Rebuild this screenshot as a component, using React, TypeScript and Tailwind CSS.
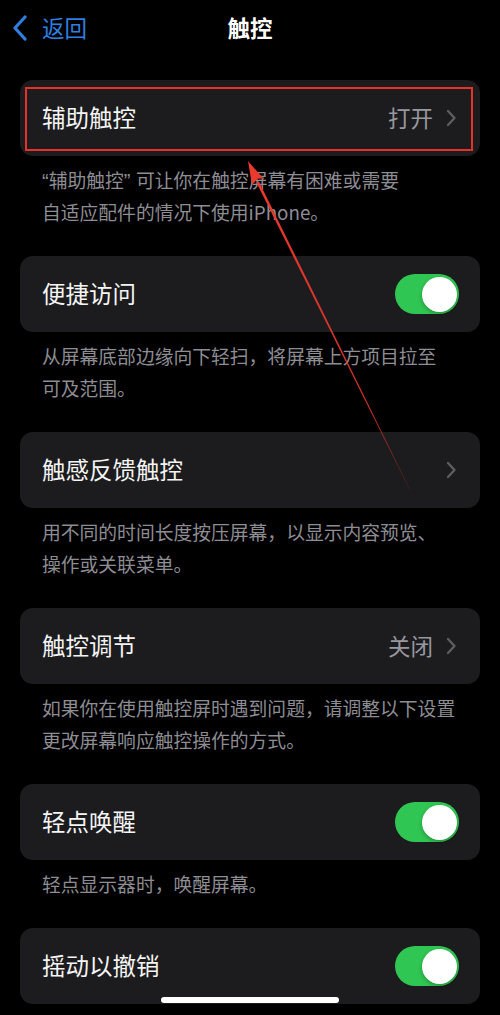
import { ReactNode } from "react";

const font = { fontFamily: '"Noto Sans CJK SC", "Noto Sans", sans-serif' };

function Chevron() {
  return (
    <svg width="12" height="18" viewBox="0 0 12 18" className="shrink-0">
      <path d="M3 2 L9.5 9 L3 16" fill="none" stroke="#5c5c61" strokeWidth="2.4" strokeLinecap="round" strokeLinejoin="round" />
    </svg>
  );
}

function Toggle() {
  return (
    <div className="flex h-[40px] w-[64px] items-center justify-end rounded-full bg-[#30c653] px-[2.5px]">
      <div className="size-[35px] rounded-full bg-white shadow-[0_2px_4px_rgba(0,0,0,0.25)]" />
    </div>
  );
}

function Row({ label, value, toggle, children }: { label: string; value?: string; toggle?: boolean; children?: ReactNode }) {
  return (
    <div className="relative flex h-[76px] items-center justify-between rounded-[13px] bg-[#1c1c1e] pl-[22px] pr-[21px]">
      <span className="text-[23.5px] text-[#f4f4f4]">{label}</span>
      {toggle ? (
        <Toggle />
      ) : (
        <div className="flex items-center gap-[12px] pr-[2px]">
          {value && <span className="text-[22.5px] text-[#98989e]">{value}</span>}
          <Chevron />
        </div>
      )}
      {children}
    </div>
  );
}

function Desc({ lines }: { lines: ReactNode[] }) {
  return (
    <div className="pb-[28px] pl-[22px] pt-[8px] text-[18.8px] leading-[32px] text-[#8d8d93]">
      {lines.map((l, i) => (
        <div key={i} className="h-[32px] overflow-hidden">{l}</div>
      ))}
    </div>
  );
}

// latin quotes so they don't take a full CJK cell
const q = "font-['Liberation_Sans'] text-[20px] leading-none";

export default function App() {
  return (
    <div className="relative h-[1015px] w-[500px] overflow-hidden bg-black" style={font}>
      <div className="relative flex h-[55px] items-center">
        <div className="flex items-center gap-[14px] pl-[12px]">
          <svg width="16" height="26" viewBox="0 0 16 26">
            <path d="M13 2 L3 13 L13 24" fill="none" stroke="#2f7fe0" strokeWidth="3.2" strokeLinecap="round" strokeLinejoin="round" />
          </svg>
          <span className="text-[22.5px] text-[#2f7fe0]">返回</span>
        </div>
        <span className="absolute left-1/2 -translate-x-1/2 text-[22.5px] font-semibold text-white">触控</span>
      </div>

      <div className="mx-5 mt-[25px]">
        <Row label="辅助触控" value="打开">
          <div className="pointer-events-none absolute bottom-[5px] left-[5px] right-[7px] top-[7px] border-2 border-[#e5322b]" />
        </Row>
        <Desc
          lines={[
            <>
              <span className={q}>“</span>辅助触控<span className={q}>” </span>可让你在触控屏幕有困难或需要
            </>,
            "自适应配件的情况下使用iPhone。",
          ]}
        />

        <Row label="便捷访问" toggle />
        <Desc lines={["从屏幕底部边缘向下轻扫，将屏幕上方项目拉至", "可及范围。"]} />

        <Row label="触感反馈触控" />
        <Desc lines={["用不同的时间长度按压屏幕，以显示内容预览、", "操作或关联菜单。"]} />

        <Row label="触控调节" value="关闭" />
        <Desc lines={["如果你在使用触控屏时遇到问题，请调整以下设置", "更改屏幕响应触控操作的方式。"]} />

        <Row label="轻点唤醒" toggle />
        <Desc lines={["轻点显示器时，唤醒屏幕。"]} />

        <Row label="摇动以撤销" toggle />
      </div>

      <svg className="pointer-events-none absolute left-0 top-0" width="500" height="1015" viewBox="0 0 500 1015">
        <defs>
          <linearGradient id="fade" x1="248" y1="162" x2="410" y2="490" gradientUnits="userSpaceOnUse">
            <stop offset="0" stopColor="#ea3a2e" stopOpacity="1" />
            <stop offset="0.75" stopColor="#e3362b" stopOpacity="0.9" />
            <stop offset="1" stopColor="#c9302a" stopOpacity="0.2" />
          </linearGradient>
        </defs>
        <polygon points="256.4,182.5 258.8,181.2 410.3,489.9 409.7,490.1" fill="url(#fade)" />
        <polygon points="248,161 263.6,178.8 257.7,178.5 252.0,185.0" fill="#ea3a2e" />
      </svg>

      <div className="absolute bottom-[12px] left-[161px] h-[6px] w-[178px] rounded-full bg-white" />
    </div>
  );
}
